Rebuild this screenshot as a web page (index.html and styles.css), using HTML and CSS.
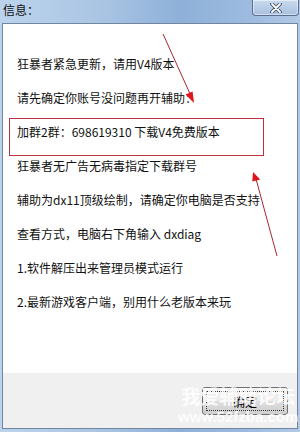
FILE: index.html
```html
<!DOCTYPE html>
<html lang="zh-CN">
<head>
    <meta charset="UTF-8">
    <meta name="viewport" content="width=device-width, initial-scale=1.0">
    <title>信息</title>
    <link rel="icon" href="data:,">
    <link rel="stylesheet" href="styles.css">
</head>
<body>
    <div class="window">
        <div class="titlebar">
            <span class="title">信息：</span>
            <button class="close-btn" aria-label="关闭">
                <svg width="12" height="10" viewBox="0 0 12 10">
                    <path d="M2 1 L10 9 M10 1 L2 9" stroke="#3a4a60" stroke-width="3.6" stroke-linecap="round"/>
                    <path d="M2 1 L10 9 M10 1 L2 9" stroke="#ffffff" stroke-width="1.8" stroke-linecap="round"/>
                </svg>
            </button>
        </div>
        <div class="client">
            <div class="content">
                <p class="line">狂暴者紧急更新，请用V4版本</p>
                <p class="line">请先确定你账号没问题再开辅助：</p>
                <p class="line">加群2群：698619310 下载V4免费版本</p>
                <p class="line">狂暴者无广告无病毒指定下载群号</p>
                <p class="line">辅助为dx11顶级绘制，请确定你电脑是否支持</p>
                <p class="line">查看方式，电脑右下角输入 dxdiag</p>
                <p class="line">1.软件解压出来管理员模式运行</p>
                <p class="line">2.最新游戏客户端，别用什么老版本来玩</p>
            </div>
            <div class="footer">
                <button class="ok-btn"><span class="focus">确定</span></button>
            </div>
        </div>

        <!-- red annotations drawn over the dialog -->
        <svg class="marks" width="300" height="432" viewBox="0 0 300 432">
            <rect x="9.5" y="118.5" width="254" height="37" fill="none" stroke="#b8343c" stroke-width="1"/>
            <line x1="163" y1="34" x2="191" y2="96" stroke="#a8282e" stroke-width="1"/>
            <polygon points="194,103 192.6,91.5 185.6,94.6" fill="#e0141c"/>
            <line x1="277" y1="256" x2="256" y2="179" stroke="#a8282e" stroke-width="1"/>
            <polygon points="253,172 260.2,179.6 252.3,181.6" fill="#e0141c"/>
        </svg>

        <div class="watermark">
            <span class="wm-name">我爱辅助论坛</span>
            <span class="wm-url">www.52fzba.com</span>
        </div>
    </div>
</body>
</html>
```

FILE: styles.css
```css
body {
    margin: 0;
    font-family: "Noto Sans CJK SC", sans-serif;
}
.window {
    position: relative;
    width: 300px;
    height: 432px;
    box-sizing: border-box;
    padding: 0 2px 3px;
    display: flex;
    flex-direction: column;
    background: linear-gradient(90deg, #bcd3ec 0%, #a9c4e3 35%, #8eb0d8 60%, #9fbce0 85%, #b2cae6 100%);
    overflow: hidden;
}
.titlebar {
    height: 23px;
    display: flex;
    justify-content: space-between;
    align-items: flex-start;
}
.title {
    margin: 2px 0 0 1px;
    font-size: 12px;
    line-height: 16px;
    color: #101010;
}
.close-btn {
    width: 47px;
    height: 16px;
    margin: 0 -1px 0 0;
    padding: 0;
    border: 1px solid #5b7090;
    border-top: none;
    border-radius: 0 0 4px 4px;
    background: linear-gradient(#c9daee, #a7c0df);
    box-shadow: inset 0 0 0 1px rgba(255, 255, 255, 0.5);
    display: flex;
    align-items: center;
    justify-content: center;
}
.client {
    flex: 1;
    display: flex;
    flex-direction: column;
    border: 1px solid #71869f;
}
.content {
    flex: 1;
    background: #ffffff;
    padding: 23px 0 0 14px;
}
.line {
    margin: 0;
    font-size: 12px;
    line-height: 34px;
    color: #111111;
    white-space: nowrap;
}
.footer {
    height: 55px;
    background: #f0f0f0;
    display: flex;
    justify-content: flex-end;
    align-items: flex-start;
}
.ok-btn {
    width: 86px;
    height: 28px;
    margin: 14px 9px 0 0;
    padding: 3px;
    border: 1px solid #707070;
    border-radius: 3px;
    background: linear-gradient(#f3f3f3 0%, #ebebeb 50%, #dddddd 50%, #cfcfcf 100%);
    font-family: "Noto Sans CJK SC", sans-serif;
    font-size: 12px;
    color: #000000;
    display: flex;
}
.focus {
    flex: 1;
    border: 1px dotted #303030;
    display: flex;
    align-items: center;
    justify-content: center;
}
.marks {
    position: absolute;
    left: 0;
    top: 0;
    pointer-events: none;
}
.watermark {
    position: absolute;
    left: 178px;
    top: 383px;
    display: flex;
    flex-direction: column;
    align-items: center;
    color: rgba(255, 255, 255, 0.85);
    font-weight: bold;
    pointer-events: none;
}
.wm-name {
    font-size: 19px;
    line-height: 26px;
    letter-spacing: 0;
}
.wm-url {
    font-family: "Liberation Sans", sans-serif;
    font-size: 15px;
    line-height: 16px;
}
```
